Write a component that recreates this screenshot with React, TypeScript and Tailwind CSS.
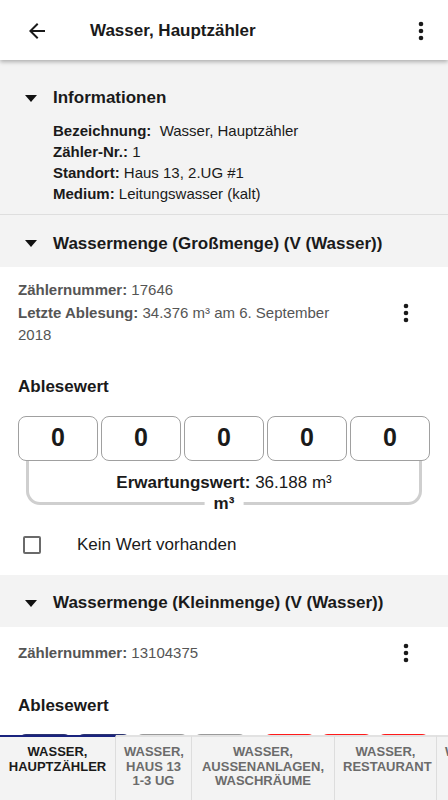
import React from 'react'

const Kebab = () => (
  <svg width="24" height="24" viewBox="0 0 24 24">
    <circle cx="12" cy="5" r="2.3" fill="#1a1a1a" />
    <circle cx="12" cy="12" r="2.3" fill="#1a1a1a" />
    <circle cx="12" cy="19" r="2.3" fill="#1a1a1a" />
  </svg>
)

const SectionHeader = ({ title }: { title: string }) => (
  <div className="flex h-[52px] items-center bg-[#f3f3f3] pt-[5px]">
    <svg className="ml-[25px] mr-[16px]" width="12" height="7" viewBox="0 0 12 7">
      <path d="M0 0h12L6 7z" fill="#111" />
    </svg>
    <p className="text-[17px] font-bold text-[#1a1a1a]">{title}</p>
  </div>
)

const Tab = ({
  lines,
  width,
  active,
}: {
  lines: string[]
  width: string
  active?: boolean
}) => (
  <div
    className={`${width} shrink-0 border-r border-r-[#dddddd] border-t-2 px-2 pt-[8px] text-center text-[13px] font-bold leading-[14.5px] whitespace-nowrap ${
      active ? 'border-t-[#1a237e] text-[#1a1a1a]' : 'border-t-[#e2e2e2] text-[#6b6b6b]'
    }`}
  >
    {lines.map((l, i) => (
      <div key={i}>{l}</div>
    ))}
  </div>
)

export default function App() {
  return (
    <div className="flex h-[800px] w-[448px] flex-col overflow-hidden bg-white font-['Liberation_Sans',Arial,sans-serif] text-[#1a1a1a]">
      {/* Toolbar */}
      <div className="relative z-10 flex h-[60px] shrink-0 items-center bg-white pt-[1px] shadow-[0_2px_4px_rgba(0,0,0,0.28)]">
        <svg className="ml-[25px]" width="24" height="24" viewBox="0 0 24 24">
          <path d="M20 11H7.83l5.59-5.59L12 4l-8 8 8 8 1.41-1.41L7.83 13H20v-2z" fill="#1a1a1a" />
        </svg>
        <p className="ml-[41px] flex-1 text-[17px] font-bold">Wasser, Hauptzähler</p>
        <div className="mr-[15px]">
          <Kebab />
        </div>
      </div>

      {/* Content */}
      <div className="h-[675px] shrink-0 overflow-hidden">
        {/* Informationen */}
        <div className="border-b border-[#dedede] bg-[#f3f3f3] pb-[10px] pt-[26px]">
          <div className="flex items-center">
            <svg className="ml-[25px] mr-[16px]" width="12" height="7" viewBox="0 0 12 7">
              <path d="M0 0h12L6 7z" fill="#111" />
            </svg>
            <p className="text-[17px] font-bold leading-[24px]">Informationen</p>
          </div>
          <div className="mt-[10px] pl-[53px] text-[15px] leading-[21px]">
            <p>
              <span className="font-bold">Bezeichnung:</span>&nbsp; Wasser, Hauptzähler
            </p>
            <p>
              <span className="font-bold">Zähler-Nr.:</span> 1
            </p>
            <p>
              <span className="font-bold">Standort:</span> Haus 13, 2.UG #1
            </p>
            <p>
              <span className="font-bold">Medium:</span> Leitungswasser (kalt)
            </p>
          </div>
        </div>

        {/* Großmenge */}
        <SectionHeader title="Wassermenge (Großmenge) (V (Wasser))" />
        <div className="bg-white px-[18px] pb-[6px]">
          <div className="flex items-center">
            <div className="flex-1 py-3 pr-[20px] text-[15px] leading-[22.5px] text-[#555555]">
              <p>
                <span className="font-bold">Zählernummer:</span> 17646
              </p>
              <p>
                <span className="font-bold">Letzte Ablesung:</span> 34.376 m³ am 6. September 2018
              </p>
            </div>
            <div className="flex h-12 w-12 items-center justify-center">
              <Kebab />
            </div>
          </div>

          <p className="mt-[17px] text-[17px] font-bold leading-[22px]">Ablesewert</p>

          <div className="mt-[18px] flex gap-[3px]">
            {[0, 1, 2, 3, 4].map((i) => (
              <div
                key={i}
                className="flex h-[45px] flex-1 items-center justify-center rounded-[8px] border border-[#a0a0a0] text-[25px] font-bold"
              >
                0
              </div>
            ))}
          </div>
          <div className="relative mx-[8px] h-[44px] rounded-b-[14px] border-x-[3px] border-b-[3px] border-[#cfcfcf]">
            <p className="pt-[11px] text-center text-[17px] leading-[22px]">
              <span className="font-bold">Erwartungswert:</span> 36.188 m³
            </p>
            <span className="absolute bottom-[-13px] left-1/2 -translate-x-1/2 bg-white px-[9px] text-[17px] font-bold leading-[22px]">
              m³
            </span>
          </div>

          <div className="mt-4 flex h-12 items-center">
            <div className="ml-[5px] h-[18px] w-[18px] rounded-[2px] border-2 border-[#6a6a6a]" />
            <p className="ml-[36px] text-[17px]">Kein Wert vorhanden</p>
          </div>
        </div>

        {/* Kleinmenge */}
        <SectionHeader title="Wassermenge (Kleinmenge) (V (Wasser))" />
        <div className="bg-white px-[18px]">
          <div className="flex h-[52px] items-center">
            <p className="flex-1 text-[15px] leading-[22px] text-[#555555]">
              <span className="font-bold">Zählernummer:</span> 13104375
            </p>
            <div className="flex h-12 w-12 items-center justify-center">
              <Kebab />
            </div>
          </div>

          <p className="mt-4 text-[17px] font-bold leading-[22px]">Ablesewert</p>

          <div className="mt-[17px] flex">
            <div className="flex flex-1 gap-[4px]">
              {['#2c3470', '#2c3470', '#9a9a9a', '#9a9a9a'].map((c, i) => (
                <div
                  key={i}
                  className="h-[45px] flex-1 rounded-[8px] border-2"
                  style={{ borderColor: c }}
                />
              ))}
            </div>
            <div className="w-[16px]" />
            <div className="flex w-[167px] gap-[4px]">
              {[0, 1, 2].map((i) => (
                <div key={i} className="h-[45px] flex-1 rounded-[8px] border-2 border-[#ff1a1a]" />
              ))}
            </div>
          </div>
        </div>
      </div>

      {/* Tabs */}
      <div className="flex h-[65px] shrink-0 overflow-hidden bg-[#f3f3f3]">
        <Tab width="w-[116px]" lines={['WASSER,', 'HAUPTZÄHLER']} active />
        <Tab width="w-[76px]" lines={['WASSER,', 'HAUS 13', '1-3 UG']} />
        <Tab width="w-[143px]" lines={['WASSER,', 'AUSSENANLAGEN,', 'WASCHRÄUME']} />
        <Tab width="w-[102px]" lines={['WASSER,', 'RESTAURANT']} />
        <div className="shrink-0 border-t-2 border-t-[#e2e2e2] pl-2 pt-[8px] text-[13px] font-bold leading-[14.5px] text-[#6b6b6b] whitespace-nowrap">
          WASSER,
        </div>
      </div>
    </div>
  )
}
